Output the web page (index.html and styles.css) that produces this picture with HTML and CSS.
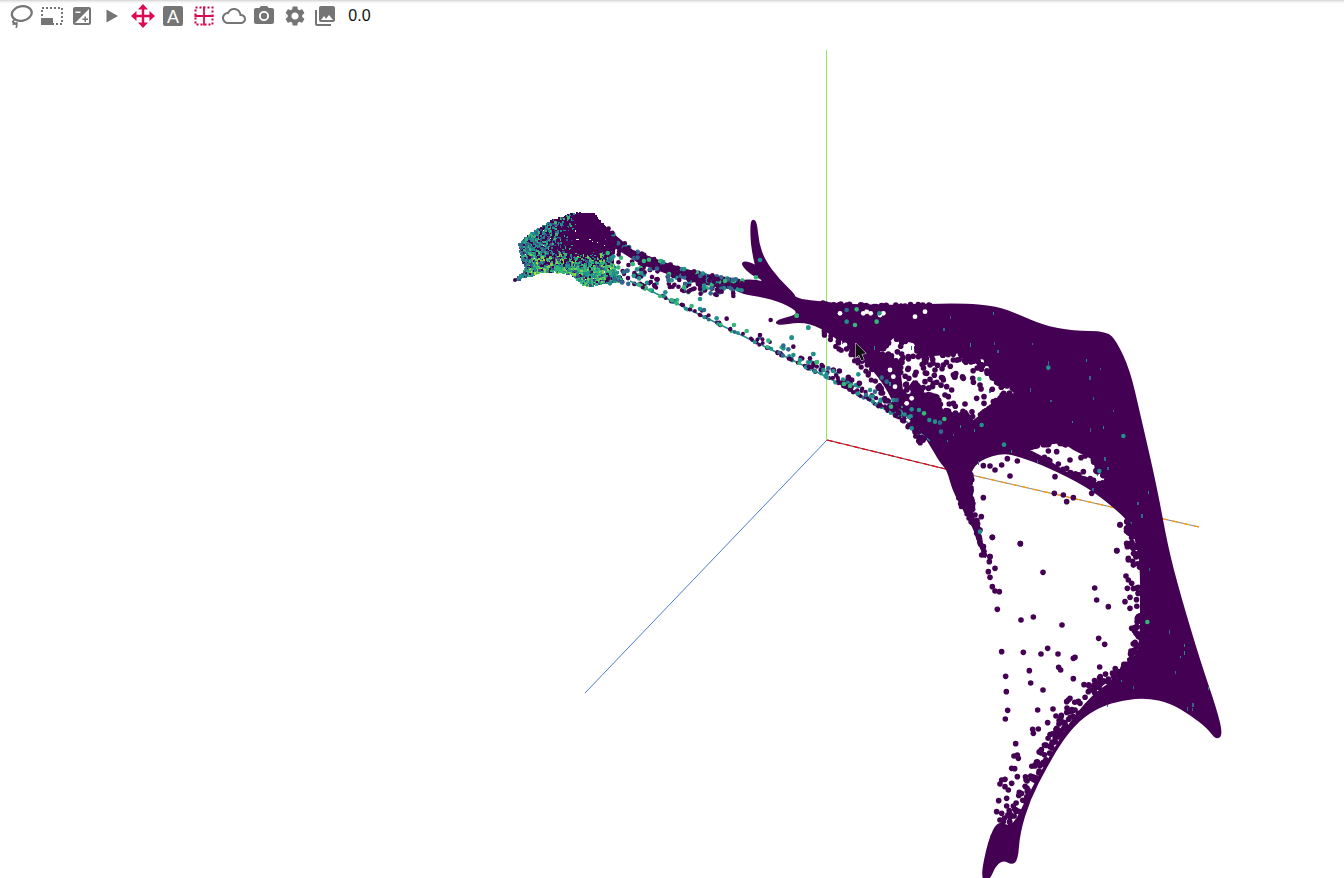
FILE: index.html
```html
<!DOCTYPE html>
<html lang="en">
<head>
<meta charset="utf-8">
<title>Scatter plot</title>
<link rel="stylesheet" href="styles.css">
</head>
<body>
<div class="toolbar">
  <button class="tool"><svg class="icon" viewBox="0 0 24 24"><ellipse class="line" cx="12.800" cy="9.500" rx="10" ry="7.200" transform="rotate(-10 12.800 9.500)"/><path class="line thin" d="M6.500 15.500c-3 .8-3.500 3.500-.8 4.200 2 .5 2.800 1.800 1.300 4.300M3 17.500l5.500 3M3.500 20.500l5-2"/></svg></button>
  <button class="tool"><svg class="icon" viewBox="0 0 24 24"><rect class="dash" x="2" y="4" width="20" height="16"/><rect class="fill" x="1" y="14" width="12" height="7"/></svg></button>
  <button class="tool"><svg class="icon" viewBox="0 0 24 24"><path class="fill" d="M19 3H5c-1.100 0-2 .9-2 2v14c0 1.100.9 2 2 2h14c1.100 0 2-.9 2-2V5c0-1.100-.9-2-2-2zM5.500 7.500h5v1.500h-5V7.500zM19 19H5L19 5v14zm-4.500-3v2H16v-2h2v-1.500h-2v-2h-1.500v2h-2V16h2z"/></svg></button>
  <button class="tool"><svg class="icon" viewBox="0 0 24 24"><path class="fill" d="M6.500 5.500L18 12 6.500 18.500z"/></svg></button>
  <button class="tool"><svg class="icon" viewBox="0 0 24 24"><path class="pink" d="M12 0l5 5.500h-3.800V10.800H18.500V7l5.500 5-5.500 5v-3.800H13.200V18.500H17l-5 5.500-5-5.500h3.800V13.200H5.500V17L0 12l5.500-5v3.800H10.800V5.500H7z"/></svg></button>
  <button class="tool"><svg class="icon" viewBox="0 0 24 24"><rect class="fill" x="2" y="2" width="20" height="20" rx="2"/><text class="letter" x="12" y="18.500">A</text></svg></button>
  <button class="tool"><svg class="icon" viewBox="0 0 24 24"><rect class="dots" x="3.500" y="3.500" width="17" height="17"/><path class="cross" d="M12 2.500v19M2.500 12h19"/></svg></button>
  <button class="tool"><svg class="icon" viewBox="0 0 24 24"><path class="fill" d="M19.350 10.040C18.670 6.590 15.640 4 12 4 9.110 4 6.600 5.640 5.350 8.040 2.340 8.360 0 10.910 0 14c0 3.310 2.690 6 6 6h13c2.760 0 5-2.240 5-5 0-2.640-2.050-4.780-4.650-4.960zM19 18H6c-2.210 0-4-1.790-4-4s1.790-4 4-4h.71C7.370 7.690 9.480 6 12 6c3.040 0 5.500 2.460 5.500 5.500v.5H19c1.660 0 3 1.340 3 3s-1.340 3-3 3z"/></svg></button>
  <button class="tool"><svg class="icon" viewBox="0 0 24 24"><path class="fill" d="M12 15.200a3.200 3.200 0 1 0 0-6.400 3.200 3.200 0 0 0 0 6.400z"/><path class="fill" d="M9 2L7.170 4H4c-1.100 0-2 .9-2 2v12c0 1.100.9 2 2 2h16c1.100 0 2-.9 2-2V6c0-1.100-.9-2-2-2h-3.170L15 2H9zm3 15c-2.760 0-5-2.240-5-5s2.240-5 5-5 5 2.240 5 5-2.240 5-5 5z"/></svg></button>
  <button class="tool"><svg class="icon" viewBox="0 0 24 24"><path class="fill" d="M19.140 12.940c.04-.3.060-.61.060-.94 0-.32-.02-.64-.07-.94l2.030-1.580c.18-.14.230-.41.120-.61l-1.920-3.320c-.12-.22-.37-.29-.59-.22l-2.390.96c-.5-.38-1.030-.7-1.620-.94l-.36-2.540c-.04-.24-.24-.41-.48-.41h-3.840c-.24 0-.43.170-.47.410l-.36 2.540c-.59.240-1.130.570-1.620.940l-2.390-.96c-.22-.08-.47 0-.59.220L2.740 8.870c-.12.210-.08.470.120.610l2.030 1.580c-.05.3-.09.630-.09.940s.02.640.07.940l-2.030 1.580c-.18.140-.23.410-.12.610l1.920 3.320c.12.220.37.290.59.220l2.390-.96c.5.380 1.030.7 1.620.94l.36 2.540c.05.240.24.410.48.410h3.840c.24 0 .44-.17.47-.41l.36-2.540c.59-.24 1.130-.56 1.620-.94l2.390.96c.22.080.47 0 .59-.22l1.920-3.320c.12-.22.070-.47-.12-.61l-2.010-1.580zM12 15.600c-1.980 0-3.600-1.620-3.600-3.600s1.620-3.600 3.600-3.600 3.600 1.620 3.600 3.600-1.620 3.600-3.600 3.600z"/></svg></button>
  <button class="tool"><svg class="icon" viewBox="0 0 24 24"><path class="fill" d="M22 16V4c0-1.100-.9-2-2-2H8c-1.100 0-2 .9-2 2v12c0 1.100.9 2 2 2h12c1.100 0 2-.9 2-2zm-11-4l2.030 2.710L16 11l4 5H8l3-4zM2 6v14c0 1.100.9 2 2 2h14v-2H4V6H2z"/></svg></button>
  <span class="value">0.0</span>
</div>
<canvas id="plot" class="plot" width="1344" height="846"></canvas>
<script src="plot.js"></script>
</body>
</html>
```

FILE: styles.css
```css
html, body {
  margin: 0;
  height: 100%;
  overflow: hidden;
  background: #fff;
}
.toolbar {
  display: flex;
  align-items: center;
  box-sizing: border-box;
  height: 32px;
  padding-left: 6px;
  background: linear-gradient(#d4d4d4 0, #f4f4f4 2px, #fff 4px);
  font-family: "Liberation Sans", Arial, sans-serif;
}
.tool {
  display: flex;
  justify-content: center;
  align-items: center;
  width: 30.4px;
  height: 32px;
  padding: 0;
  border: 0;
  background: none;
}
.icon {
  width: 24px;
  height: 24px;
  display: block;
}
.fill { fill: #757575; }
.line {
  fill: none;
  stroke: #757575;
  stroke-width: 2.300;
}
.line.thin { stroke-width: 1.600; }
.dash {
  fill: none;
  stroke: #757575;
  stroke-width: 2;
  stroke-dasharray: 2 2;
}
.pink { fill: #dc0a50; }
.letter {
  font-family: "Liberation Sans", Arial, sans-serif;
  font-size: 18px;
  fill: #fff;
  text-anchor: middle;
}
.cross {
  fill: none;
  stroke: #dc0a50;
  stroke-width: 1.800;
}
.dots {
  fill: none;
  stroke: #c8004a;
  stroke-width: 2;
  stroke-dasharray: 2 2;
}
.value {
  margin-left: 8px;
  font-size: 16px;
  color: #111;
}
.plot {
  display: block;
}
```

FILE: plot.js
```js
(function () {
  var ctx = document.getElementById('plot').getContext('2d');
  ctx.translate(0, -32);

  var P = '#440154', B = '#31688e', T = '#21908d', G = '#35b779', L = '#7ad151', Y = '#a8db34', N = '#3b528b';
  var seed = 1234567;
  function rnd() {
    seed |= 0; seed = seed + 0x6D2B79F5 | 0;
    var t = Math.imul(seed ^ seed >>> 15, 1 | seed);
    t = t + Math.imul(t ^ t >>> 7, 61 | t) ^ t;
    return ((t ^ t >>> 14) >>> 0) / 4294967296;
  }
  function poly(pts) {
    var p = new Path2D();
    pts.forEach(function (q, i) { if (i) p.lineTo(q[0], q[1]); else p.moveTo(q[0], q[1]); });
    p.closePath();
    return p;
  }
  /* closed curve through the midpoints of a polygon's sides */
  function smooth(pts) {
    var p = new Path2D(), n = pts.length;
    p.moveTo((pts[n - 1][0] + pts[0][0]) / 2, (pts[n - 1][1] + pts[0][1]) / 2);
    for (var i = 0; i < n; i++) {
      var q = pts[i], s = pts[(i + 1) % n];
      p.quadraticCurveTo(q[0], q[1], (q[0] + s[0]) / 2, (q[1] + s[1]) / 2);
    }
    p.closePath();
    return p;
  }
  function dot(x, y, c, r) {
    ctx.fillStyle = c;
    ctx.beginPath();
    ctx.arc(x, y, r || 2.300, 0, Math.PI * 2);
    ctx.fill();
  }
  function frame(ox, oy, list, c, r) {
    list.forEach(function (d) { dot(ox + d[0] / 3, oy + d[1] / 3, d[2] || c, r); });
  }
  function along(line, x) {
    for (var i = 1; i < line.length; i++) {
      if (x <= line[i][0]) {
        var a = line[i - 1], b = line[i];
        return a[1] + (b[1] - a[1]) * (x - a[0]) / (b[0] - a[0]);
      }
    }
    return line[line.length - 1][1];
  }
  function inPath(path, x, y) {
    ctx.save();
    ctx.setTransform(1, 0, 0, 1, 0, 0);
    var r = ctx.isPointInPath(path, x, y);
    ctx.restore();
    return r;
  }
  /* scallop an edge: points along a polyline, pushed off it by up to (dx, dy) */
  function rim(line, count, dx, dy, r) {
    for (var i = 0; i < count; i++) {
      var k = rnd() * (line.length - 1), j = Math.floor(k), f = k - j;
      var a = line[j], b = line[j + 1], o = rnd();
      dot(a[0] + (b[0] - a[0]) * f + dx * o, a[1] + (b[1] - a[1]) * f + dy * o, P, r || 2.800);
    }
  }

  /* axes under the cloud */
  function axis(x1, y1, x2, y2, c, w) {
    ctx.strokeStyle = c; ctx.lineWidth = w || 1;
    ctx.beginPath(); ctx.moveTo(x1, y1); ctx.lineTo(x2, y2); ctx.stroke();
  }
  axis(826.5, 50, 826.5, 440, '#8ee860', 1);
  axis(827, 440, 585, 693, '#3a6cc8', 0.900);
  axis(827, 440, 958, 472, '#5a3a4a', 1.200);
  ctx.setLineDash([6, 3]);
  axis(827, 440, 958, 472, '#f00010', 1.200);
  ctx.setLineDash([]);
  axis(958, 472, 1199, 527, '#8a8a8a', 1.200);
  ctx.setLineDash([6, 5]);
  axis(958, 472, 1199, 527, '#ff9800', 1.200);
  ctx.setLineDash([]);

  /* solid body of the cloud */
  var body = smooth([[733,280],[763,279],[797,298],[807,300],[847,304],[897,305],[960,303],[997,306],[1020,315],[1043,325],[1073,331],[1107,331],[1117,342],[1130,370],[1140,413],[1157,487],[1168,547],[1180,593],[1200,660],[1217,710],[1223,735],[1216,740],[1207,728],[1190,715],[1170,703],[1147,698],[1123,700],[1100,707],[1080,720],[1063,740],[1047,767],[1030,800],[1020,833],[1018,860],[1012,865],[1003,860],[995,867],[990,880],[980,880],[988,840],[998,820],[1012,828],[1027,797],[1040,773],[1057,743],[1073,717],[1097,690],[1120,677],[1133,670],[1137,653],[1140,633],[1140,607],[1140,563],[1135,540],[1130,523],[1113,507],[1087,487],[1047,467],[1020,457],[1003,453],[980,460],[970,473],[970,493],[973,513],[980,537],[988,562],[980,550],[973,527],[953,493],[947,470],[940,463],[927,440],[913,423],[893,403],[887,390],[873,370],[847,347],[820,327],[800,322],[777,326],[775,320],[800,314],[787,305],[767,298],[735,293]]);
  ctx.fillStyle = P;
  ctx.fill(body);
  ctx.fill(smooth([[750,223],[753,219],[757,222],[759,243],[765,260],[779,279],[799,298],[790,302],[760,285],[751,250]]));
  ctx.fill(smooth([[740,264],[746,260],[768,271],[768,282],[752,276]]));
  ctx.fill(poly([[600,222],[633,250],[667,263],[700,273],[740,279],[745,292],[700,284],[667,274],[640,264],[610,245]]));

  /* holes in the body */
  ctx.fillStyle = '#fff';
  function zoom4(pts) { return pts.map(function (q) { return [780 + q[0] / 3, 280 + q[1] / 3]; }); }
  var hole1 = zoom4([[300,215],[340,175],[400,190],[430,230],[500,225],[540,220],[560,250],[590,240],[620,270],[630,300],[700,325],[715,340],[670,340],[650,370],[620,390],[580,420],[560,390],[530,400],[490,390],[470,350],[430,340],[400,300],[370,340],[360,260],[340,230],[310,215]]);
  var hole2 = zoom4([[740,505],[780,495],[850,490],[880,510],[940,540],[945,570],[975,590],[965,615],[920,590],[860,575],[790,530]]);
  ctx.fill(poly(hole1));
  ctx.fill(poly(hole2));
  frame(780, 280, [[180,100],[250,100],[272,100],[310,100],[405,110],[435,95],[180,188],[195,195],[340,290],[385,335],[300,105],[260,95],[605,245],[620,265],[700,330],[330,270],[345,320],[380,370],[395,355]], '#fff', 2.400);

  /* head: dense colour noise */
  var head = poly([[514,280],[525,267],[520,257],[518,243],[530,232],[550,220],[573,212],[593,213],[600,222],[613,235],[612,262],[622,280],[590,284],[582,284],[570,273],[550,270],[525,275]]);
  function headColour(x, y) {
    var r = rnd();
    var purple = Math.max(0, Math.min(1, (x - 530) / 45)) * Math.max(0, Math.min(1, (266 - y) / 18));
    if (r < purple) return P;
    if (y > 252 && x > 528 && x < 615) {
      var s = rnd();
      if (s < 0.3) return G;
      if (s < 0.46) return L;
      if (s < 0.54 && x < 580) return Y;
      if (s < 0.76) return T;
      if (s < 0.9) return N;
      return P;
    }
    var q = rnd();
    if (q < 0.38) return T;
    if (q < 0.55) return B;
    if (q < 0.76) return G;
    if (q < 0.88) return N;
    return P;
  }
  var n = 0;
  while (n < 5600) {
    var hx = 512 + rnd() * 112, hy = 210 + rnd() * 76;
    if (!inPath(head, hx, hy)) continue;
    ctx.fillStyle = headColour(hx, hy);
    var w = rnd() < 0.2 ? 3 : 2;
    ctx.fillRect(Math.round(hx), Math.round(hy), w, w);
    n++;
  }
  dot(515, 280, P, 2);

  /* neck: scattered dots between the two edges */
  var topEdge = [[605,225],[633,250],[667,263],[700,273],[745,281]];
  var lowEdge = [[605,284],[633,284],[667,290],[700,294],[745,297]];
  for (var i = 0; i < 240; i++) {
    var x = 606 + rnd() * 137;
    var a = along(topEdge, x), b = along(lowEdge, x);
    var y = a + Math.pow(rnd(), 1.500) * (b - a);
    var r = rnd();
    dot(x, y, r < 0.66 ? P : r < 0.8 ? B : r < 0.92 ? T : G, 2.300);
  }

  /* long thin strip running into the body */
  var strip = [[630,282],[680,306],[733,332],[780,355],[827,378],[867,400],[907,423],[930,442]];
  ctx.lineWidth = 1.500;
  ctx.strokeStyle = T;
  ctx.beginPath();
  strip.forEach(function (q, k) { if (k) ctx.lineTo(q[0], q[1] - 1); else ctx.moveTo(q[0], q[1] - 1); });
  ctx.stroke();
  for (i = 0; i < 130; i++) {
    x = 635 + rnd() * 270;
    y = along(strip, x);
    var up = rnd() < 0.8 ? rnd() * 2.500 : rnd() * 10;
    r = rnd();
    dot(x, y - up, r < 0.55 ? P : r < 0.7 ? B : r < 0.88 ? T : G, 2);
  }
  for (i = 0; i < 90; i++) {
    x = 800 + rnd() * 120;
    y = along(strip, x) - rnd() * 10;
    dot(x, y, rnd() < 0.65 ? P : T, 2.200);
  }

  /* coloured specks inside the body */
  for (i = 0; i < 170; i++) {
    x = 850 + rnd() * 370; y = 305 + rnd() * 430;
    if (!inPath(body, x, y)) continue;
    ctx.fillStyle = rnd() < 0.6 ? B : T;
    ctx.fillRect(Math.round(x), Math.round(y), rnd() < 0.3 ? 2 : 1, 2 + Math.floor(rnd() * 3));
  }

  /* scalloped edges */
  rim(hole1, 90, 0, 0, 2.800);
  rim(hole2, 40, 0, 0, 2.800);
  rim([[820,327],[847,347],[873,370],[887,390],[893,403],[913,423],[927,440]], 60, -6, 4, 2.600);
  rim([[800,302],[847,304],[897,305],[930,304]], 50, 0, 3, 2.800);
  rim([[1012,828],[1027,797],[1040,773],[1057,743],[1073,717],[1097,690],[1120,677],[1133,670]], 130, -9, -7, 2.800);
  rim([[1133,670],[1137,653],[1140,633],[1140,607],[1140,563],[1135,540],[1130,523]], 75, -7, 0, 2.800);
  rim([[953,493],[973,527],[985,557]], 22, 3, 0, 2.500);
  rim([[970,473],[970,493],[973,513],[980,537]], 22, 2, 0, 2.500);

  /* extra points inside the big hole, leaving its centre open */
  var hole = poly(hole1);
  n = 0;
  while (n < 70) {
    x = 880 + rnd() * 130; y = 335 + rnd() * 85;
    if (!inPath(hole, x, y)) continue;
    n++;
    if (Math.hypot(x - 962, y - 392) < 15) continue;
    dot(x, y, P, 2.800);
  }

  /* isolated purple points, by zoomed frame */
  frame(780, 280, [[365,222],[385,230],[365,240],[415,230],[433,248],[450,255],[490,255],[520,240],[465,270],[405,285],[435,305],[460,310],[490,300],[525,290],[550,295],[578,295],[515,330],[505,350],[495,345],[520,370],[555,372],[590,355],[612,350],[612,370],[640,365],[600,315],[432,345],[470,370],[380,330],[360,340],[440,280],[415,320],[445,325],[500,320],
    [682,536],[712,543],[665,555],[630,558],[610,557],[645,570],[572,584],[575,600],[690,588],[610,653],[578,688],[604,710],[585,705],[590,722],[637,772],[721,791],[600,750],[610,800],[605,825],[630,830],[823,640],[850,645],[880,653],[860,665],[935,640],[1020,735],[1040,725],[1040,790],[1010,812],[1045,835],[1050,760],[1015,680],
    [805,513],[830,515],[835,552],[870,540],[903,533],[860,565],[825,590],[910,575],
    [175,185],[200,207],[222,222],[240,240],[262,255],[277,268],[290,263],[305,293],[160,270],[178,273],[205,292],[215,300],[238,310],[205,320]], P, 2.800);
  frame(940, 520, [[157,52],[241,71],[309,157],[150,172],[157,200],[165,213],[178,215],[172,268],[243,300],[280,291],[366,315],[185,395],[250,397],[303,402],[323,385],[354,402],[400,415],[405,412],[356,442],[362,450],[268,452],[197,469],[272,489],[400,476],[432,494],[199,515],[309,510],[479,441],[476,355],[494,373],[464,204],[470,240],[505,260],[531,92],[540,14],[203,571],[293,570],[339,567],[348,588],[381,564],[196,597],[323,608],[369,606],[278,628],[295,627],[280,640],[227,671],[300,694],[318,675],[330,680],[345,665],[232,705],[222,708],[235,715],[300,737],[215,745],[224,746],[275,775],[232,770],[185,780],[195,778],[180,792],[215,790],[195,800],[205,810],[200,835],[176,842],[200,858],[220,858],[170,875],[185,880],[210,882],[180,900],[190,905],[205,925],[175,925],[160,950],[385,540],[390,535],[380,545],[420,550],[405,570],[415,580],[400,590],[445,515],[462,495],[455,510],[488,487],[505,477],[515,487],[530,465],[555,470],[565,432],[555,440],[590,400],[590,378],[597,350],[605,340],[575,325],[590,320],[595,290],[605,295],[570,265],[555,245],[570,232],[562,205],[575,190],[565,180],[558,168],[600,140],[565,120],[583,100],[561,72],[562,80],[590,50],[560,30],[565,38],[148,125],[165,145],[145,155],[133,105],[150,110],[130,80],[120,65],[110,40],[100,10],[110,15],[355,630],[365,640],[350,625],[375,620]], P, 2.800);

  /* coloured points */
  frame(780, 280, [[290,125,G],[225,135,G],[200,125,T],[298,100,T],[200,90,B],[230,88,G],[85,143,G],[35,173,T],[50,107,G],[805,263,T],[672,494,T],[605,435,T],[598,297,G],[958,573,T],[1030,468,T],[417,390,T],[432,400,G],[395,388,T],[448,420,T],[465,425,T],[480,428,B],[493,417,G],[483,455,B],[333,380,G],[235,283,T],[111,246,G],[100,222,G],[130,270,T],[145,265,B],[160,273,T],[210,318,G],[192,312,G],[270,330,T],[285,335,B],[258,345,B],[305,293,B],[320,305,B],[340,360,T],[350,360,B],[25,208,B],[40,225,T],[60,240,T],[10,205,T],[395,445,T]]);
  frame(500, 200, [[600,297,T],[496,277,T],[600,327,T],[612,330,B],[650,355,T],[702,375,G],[740,393,G],[805,422,G],[875,413,T],[850,437,B],[940,462,T],[950,487,G],[675,243,G],[768,232,G],[890,347,G],[925,383,T],[515,300,G],[575,318,G],[530,310,G],[780,180,T],
    [680,356,P],[880,440,P],[812,360,P],[780,405,P],[700,288,P],[600,267,P],[665,275,P],[632,280,B],[965,495,P],[930,475,P],[1015,543,P]]);
  frame(940, 520, [[120,35,T],[622,306,G]]);

  /* pointer */
  var cur = new Path2D('M855.500 343v15l3.500-3 2.500 5.500 2.500-1-2.500-5.500 4.500-.5z');
  ctx.fillStyle = '#111'; ctx.strokeStyle = '#fff'; ctx.lineWidth = 1;
  ctx.stroke(cur); ctx.fill(cur);
})();
```
